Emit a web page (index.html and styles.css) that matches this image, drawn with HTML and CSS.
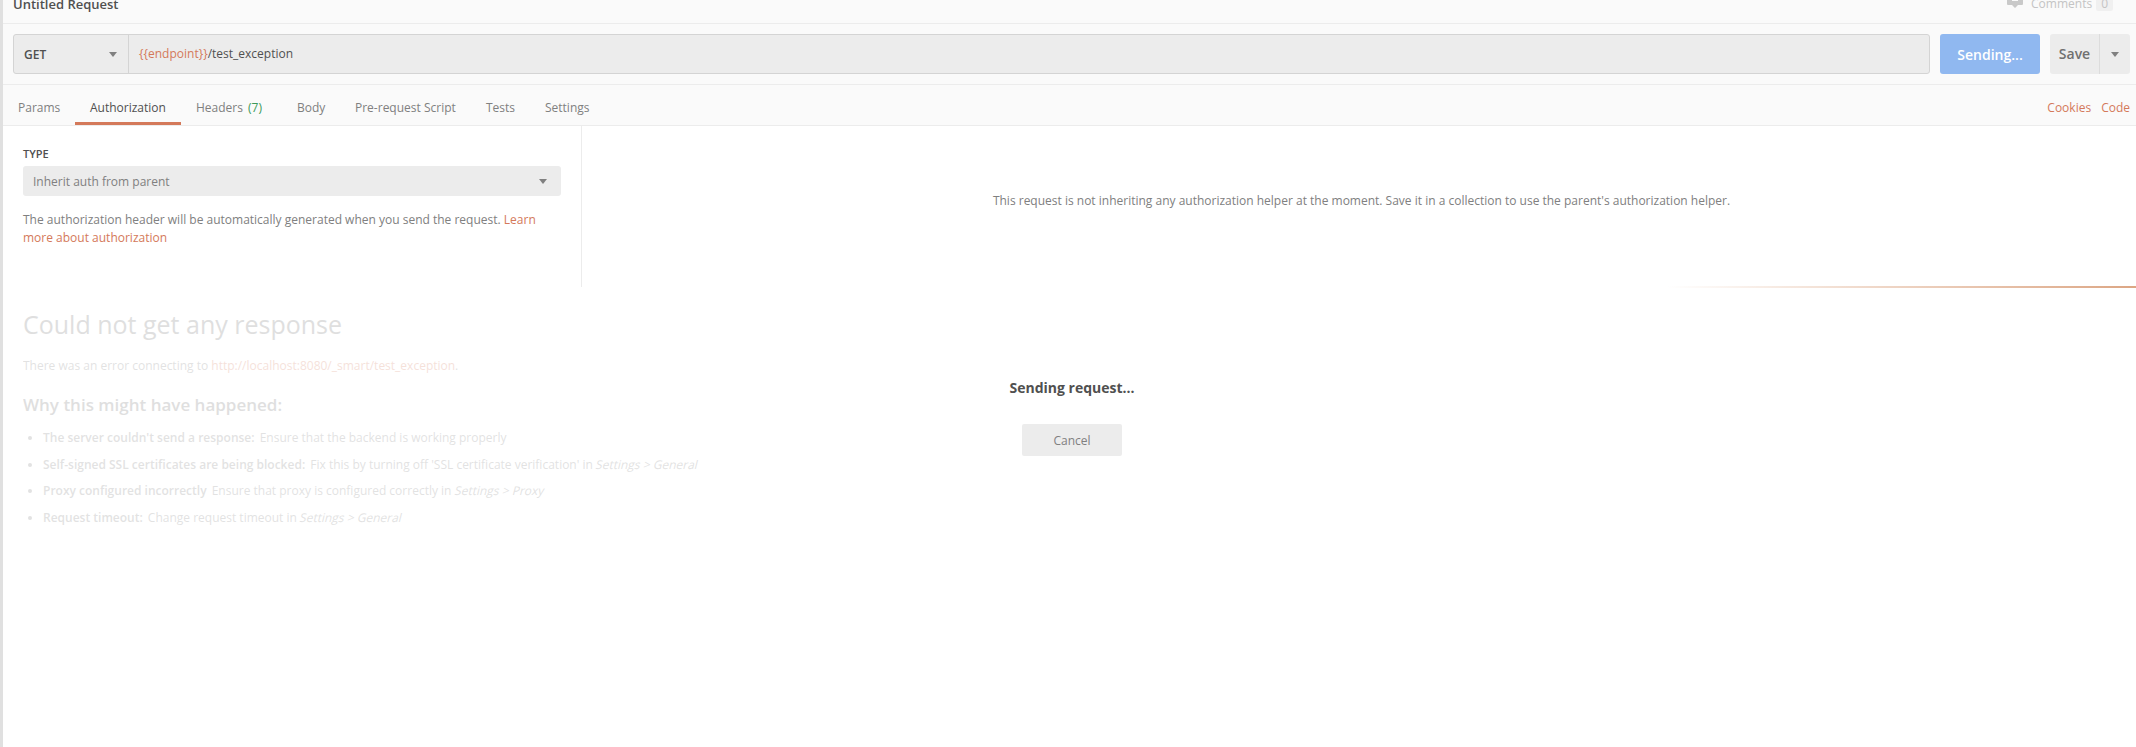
FILE: index.html
```html
<!DOCTYPE html>
<html lang="en">
<head>
<meta charset="utf-8">
<title>Untitled Request</title>
<link rel="stylesheet" href="styles.css">
</head>
<body>
<div class="app">
  <header class="titlebar">
    <span class="title">Untitled Request</span>
    <div class="comments">
      <svg class="comment-icon" width="16" height="11" viewBox="0 0 16 11"><path d="M1 0h14a1 1 0 0 1 1 1v6a1 1 0 0 1-1 1h-4l-3 3-3-3H1a1 1 0 0 1-1-1V1a1 1 0 0 1 1-1z" fill="#c9c9c9"/><rect x="5" y="2.5" width="6" height="1.5" fill="#fafafa"/></svg>
      <span class="comments-label">Comments</span>
      <span class="comments-count">0</span>
    </div>
  </header>
  <section class="urlrow">
    <div class="urlbox">
      <div class="method"><span>GET</span><i class="caret"></i></div>
      <div class="url"><span class="var">{{endpoint}}</span>/test_exception</div>
    </div>
    <button class="send">Sending...</button>
    <div class="save"><span class="save-label">Save</span><span class="save-more"><i class="caret"></i></span></div>
  </section>
  <nav class="tabs">
    <a class="tab tab-params">Params</a>
    <a class="tab tab-auth active">Authorization</a>
    <a class="tab tab-headers">Headers <span class="count">(7)</span></a>
    <a class="tab tab-body">Body</a>
    <a class="tab tab-pre">Pre-request Script</a>
    <a class="tab tab-tests">Tests</a>
    <a class="tab tab-settings">Settings</a>
    <div class="tab-links"><a>Cookies</a><a>Code</a></div>
  </nav>
  <section class="auth">
    <div class="auth-left">
      <div class="type-label">TYPE</div>
      <div class="select"><span>Inherit auth from parent</span><i class="caret"></i></div>
      <p class="auth-help">The authorization header will be automatically generated when you send the request. <a>Learn more about authorization</a></p>
    </div>
    <div class="auth-right">This request is not inheriting any authorization helper at the moment. Save it in a collection to use the parent's authorization helper.</div>
  </section>
  <div class="progress"></div>
  <section class="response">
    <div class="error">
      <h1>Could not get any response</h1>
      <p class="err-line">There was an error connecting to <a>http://localhost:8080/_smart/test_exception</a>.</p>
      <h2>Why this might have happened:</h2>
      <ul>
        <li><b>The server couldn't send a response:</b> Ensure that the backend is working properly</li>
        <li><b>Self-signed SSL certificates are being blocked:</b> Fix this by turning off 'SSL certificate verification' in <span class="path">Settings &gt; General</span></li>
        <li><b>Proxy configured incorrectly</b> Ensure that proxy is configured correctly in <span class="path">Settings &gt; Proxy</span></li>
        <li><b>Request timeout:</b> Change request timeout in <span class="path">Settings &gt; General</span></li>
      </ul>
    </div>
    <div class="sending">
      <div class="sending-text">Sending request...</div>
      <button class="cancel">Cancel</button>
    </div>
  </section>
</div>
</body>
</html>
```

FILE: styles.css
```css
* { box-sizing: border-box; }
html, body { margin: 0; padding: 0; height: 100%; overflow: hidden; background: #fff; }
body { font-family: "Open Sans", sans-serif; font-size: 12px; color: #808080; }
a { color: #d4795a; }
.app { height: 747px; border-left: 3px solid #e0e0e0; display: flex; flex-direction: column; }
.caret { display: block; width: 0; height: 0; border-left: 4px solid transparent; border-right: 4px solid transparent; border-top: 5px solid #808080; }

.titlebar { height: 24px; flex: none; background: #fafafa; border-bottom: 1px solid #ececec; display: flex; justify-content: space-between; padding: 0 23px 0 10px; overflow: hidden; }
.title { font-size: 13px; font-weight: 600; color: #505050; line-height: 8px; height: 8px; }
.comments { display: flex; align-items: flex-start; margin-top: -3px; height: 14px; }
.comment-icon { margin-right: 8px; }
.comments-label { color: #c4c4c4; line-height: 14px; }
.comments-count { margin-left: 4px; padding: 0 5px; background: #f0f0f0; color: #c4c4c4; line-height: 14px; border-radius: 2px; }

.urlrow { height: 61px; flex: none; background: #fafafa; border-bottom: 1px solid #ececec; display: flex; padding: 10px 6px 10px 10px; }
.urlbox { flex: 1; display: flex; height: 40px; background: #ececec; border: 1px solid #d4d4d4; border-radius: 3px; }
.method { width: 115px; border-right: 1px solid #d4d4d4; display: flex; align-items: center; justify-content: space-between; padding: 0 11px 0 10px; font-weight: 600; color: #505050; font-size: 12px; }
.url { flex: 1; padding: 0 10px; line-height: 38px; color: #505050; font-size: 12px; }
.var { color: #d4795a; }
.send { margin-left: 10px; width: 100px; height: 40px; border: 0; border-radius: 3px; background: #90b8f0; color: #fff; font: 600 14px "Open Sans", sans-serif; }
.save { margin-left: 10px; width: 80px; height: 40px; display: flex; background: #ececec; border-radius: 3px; color: #707070; font-size: 14px; font-weight: 600; }
.save-label { width: 50px; border-right: 1px solid #dcdcdc; text-align: center; line-height: 40px; }
.save-more { flex: 1; display: flex; align-items: center; justify-content: center; }

.tabs { height: 41px; flex: none; background: #fafafa; border-bottom: 1px solid #ececec; display: flex; padding-right: 6px; }
.tab { display: block; height: 40px; line-height: 46px; padding: 0 15px; color: #808080; white-space: nowrap; }
.tab-params { padding: 0 0 0 15px; width: 72px; }
.tab-auth { width: 106px; }
.tab-headers { width: 101px; }
.tab-body { width: 58px; }
.tab-pre { width: 131px; }
.tab-tests { width: 59px; }
.tab.active { color: #505050; border-bottom: 3px solid #d4795a; }
.count { color: #3c9a5a; margin-left: 2px; }
.tab-links { margin-left: auto; display: flex; gap: 10px; line-height: 46px; }

.auth { height: 161px; flex: none; display: flex; }
.auth-left { width: 579px; border-right: 1px solid #ececec; padding: 21px 20px 0 20px; }
.type-label { font-size: 11px; font-weight: 600; color: #505050; line-height: 14px; }
.select { margin-top: 5px; width: 538px; height: 30px; background: #ececec; border-radius: 3px; display: flex; align-items: center; justify-content: space-between; padding: 0 14px 0 10px; }
.auth-help { margin: 15px 0 0; line-height: 18px; width: 538px; }
.auth-right { flex: 1; text-align: center; padding: 66px 0 0 5px; color: #808080; }

.progress { height: 2px; flex: none; margin-top: -1px; background: linear-gradient(to right, rgba(220,166,132,0) 78%, #dca684 100%); }

.response { flex: 1; position: relative; }
.error { opacity: .22; padding: 0 0 0 20px; }
.error h1 { margin: 20px 0 0; font-size: 25px; font-weight: 400; line-height: 33px; color: #707070; }
.err-line { margin: 16px 0 0; line-height: 18px; }
.error h2 { margin: 18px 0 0; font-size: 17px; font-weight: 600; line-height: 24px; color: #707070; }
.error ul { margin: 8px 0 0; padding: 0 0 0 20px; }
.error li { line-height: 26.7px; }
.error b { font-weight: 600; margin-right: 2px; }
.path { display: inline-block; transform: skewX(-14deg); }
.sending { position: absolute; top: 90px; left: 969px; width: 200px; display: flex; flex-direction: column; align-items: center; }
.sending-text { font-size: 14px; font-weight: 700; color: #505050; line-height: 20px; }
.cancel { margin-top: 26px; width: 100px; height: 32px; border: 0; border-radius: 2px; background: #ececec; color: #808080; font: 400 12px "Open Sans", sans-serif; }
```
